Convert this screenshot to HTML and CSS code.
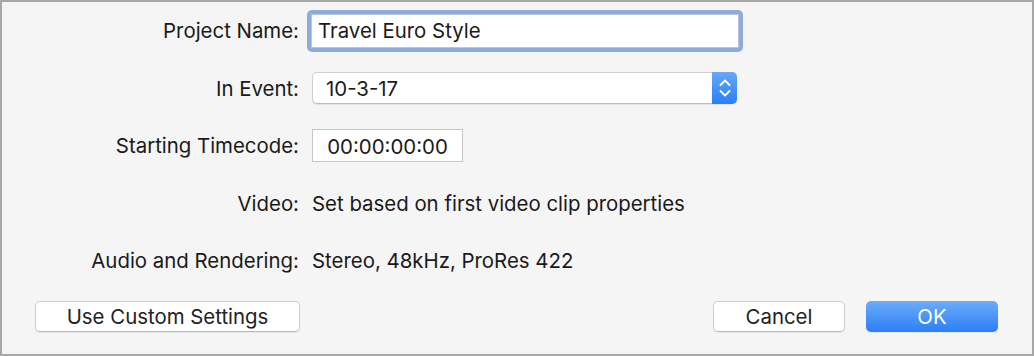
FILE: index.html
```html
<!DOCTYPE html>
<html lang="en">
<head>
    <meta charset="UTF-8">
    <meta name="viewport" content="width=device-width, initial-scale=1.0">
    <title>New Project</title>
    <link rel="stylesheet" href="styles.css">
</head>
<body>
    <div class="dialog">
        <div class="form">
            <div class="row">
                <div class="label">Project Name:</div>
                <div class="value">
                    <div class="focus-ring">
                        <div class="text-field">Travel Euro Style</div>
                    </div>
                </div>
            </div>
            <div class="row">
                <div class="label">In Event:</div>
                <div class="value">
                    <div class="popup">
                        <span class="popup-text">10-3-17</span>
                        <span class="stepper">
                            <svg width="12" height="20" viewBox="0 0 12 20">
                                <polyline points="1.5,7 6,2.5 10.5,7" fill="none" stroke="#fff" stroke-width="1.8" stroke-linecap="round" stroke-linejoin="round"/>
                                <polyline points="1.5,13 6,17.5 10.5,13" fill="none" stroke="#fff" stroke-width="1.8" stroke-linecap="round" stroke-linejoin="round"/>
                            </svg>
                        </span>
                    </div>
                </div>
            </div>
            <div class="row">
                <div class="label">Starting Timecode:</div>
                <div class="value">
                    <div class="timecode">00:00:00:00</div>
                </div>
            </div>
            <div class="row">
                <div class="label">Video:</div>
                <div class="value">Set based on first video clip properties</div>
            </div>
            <div class="row">
                <div class="label">Audio and Rendering:</div>
                <div class="value">Stereo, 48kHz, ProRes 422</div>
            </div>
        </div>
        <div class="footer">
            <button class="btn btn-wide">Use Custom Settings</button>
            <div class="footer-right">
                <button class="btn">Cancel</button>
                <button class="btn btn-default">OK</button>
            </div>
        </div>
    </div>
</body>
</html>
```

FILE: styles.css
```css
body {
    margin: 0;
    font-family: Inter, "Liberation Sans", Arial, sans-serif;
    font-size: 20.4px;
    color: #1a1a1a;
}
.dialog {
    width: 1034px;
    height: 356px;
    box-sizing: border-box;
    border: 2px solid #a8a8a8;
    background: #f5f5f5;
}
.form {
    display: flex;
    flex-direction: column;
}
.row {
    display: flex;
    align-items: center;
    height: 57.5px;
}
.label {
    width: 297px;
    text-align: right;
    margin-right: 13px;
    white-space: nowrap;
}
.value {
    flex: 1;
    white-space: nowrap;
}
.focus-ring {
    width: 428px;
    margin-left: -5px;
    padding: 4px;
    background: #8eabda;
    border-radius: 5px;
}
.text-field {
    height: 32px;
    line-height: 32px;
    background: #fff;
    border: 1px solid #b8c6de;
    padding-left: 6px;
}
.popup {
    width: 425px;
    height: 32px;
    box-sizing: border-box;
    display: flex;
    align-items: center;
    justify-content: space-between;
    background: #fff;
    border: 1px solid #cfcfcf;
    border-bottom-color: #bcbcbc;
    border-radius: 5px;
    box-shadow: 0 1px 1px rgba(0, 0, 0, 0.08);
}
.popup-text {
    padding-left: 13px;
}
.stepper {
    width: 25px;
    height: 32px;
    margin: -1px -1px -1px 0;
    display: flex;
    align-items: center;
    justify-content: center;
    background: linear-gradient(#67a8f9, #2a7ef6);
    border-radius: 0 5px 5px 0;
}
.stepper svg {
    display: block;
}
.timecode {
    width: 151px;
    height: 33px;
    line-height: 33px;
    box-sizing: border-box;
    text-align: center;
    background: #fff;
    border: 1px solid #c6c6c6;
}
.footer {
    display: flex;
    justify-content: space-between;
    align-items: center;
    padding: 11px 34px 0 33px;
}
.footer-right {
    display: flex;
    gap: 21px;
}
.btn {
    width: 132px;
    height: 31px;
    font-family: inherit;
    font-size: 20.4px;
    color: #222;
    background: #fff;
    border: 1px solid #cdcdcd;
    border-bottom-color: #b8b8b8;
    border-radius: 5px;
    box-shadow: 0 1px 1px rgba(0, 0, 0, 0.06);
    padding: 0;
}
.btn-wide {
    width: 265px;
}
.btn-default {
    color: #fff;
    border: none;
    background: linear-gradient(#6cadf9, #2b7ef7);
}
```
